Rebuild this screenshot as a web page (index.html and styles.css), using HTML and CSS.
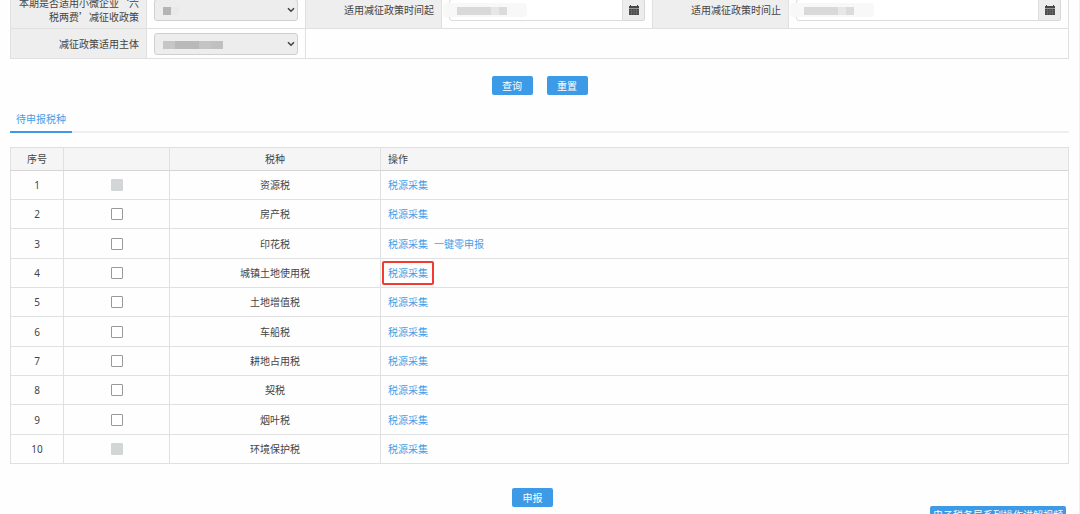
FILE: index.html
```html
<!DOCTYPE html>
<html lang="zh-CN">
<head>
    <meta charset="utf-8">
    <title>待申报税种</title>
    <meta name="viewport" content="width=device-width, initial-scale=1">
    <link rel="stylesheet" href="styles.css">
</head>
<body>
    <main class="page">
        <form id="query">
            <table class="form-table">
                <colgroup>
                    <col class="c-label"><col class="c-select">
                    <col class="c-label"><col class="c-date">
                    <col class="c-label"><col>
                </colgroup>
                <tr class="tall">
                    <th><label for="sfsy">本期是否适用小微企业‘六<br>税两费’减征收政策</label></th>
                    <td>
                        <div class="field">
                            <select id="sfsy"><option></option></select>
                            <svg class="chevron" viewBox="0 0 8 6"><path d="M1 1.2 4 4.2 7 1.2" /></svg>
                            <span class="mask short"><i></i><i></i></span>
                        </div>
                    </td>
                    <th><label for="sjq">适用减征政策时间起</label></th>
                    <td>
                        <div class="field">
                            <input id="sjq" type="text">
                            <button type="button" class="cal" aria-label="选择日期">
                                <svg viewBox="0 0 10 10"><path d="M1 0h1v1h6V0h1v1h1v2H0V1h1zM0 3.6h10V10H0z" /><path class="grid" d="M0 5.8h10M0 8h10M2.5 3.6V10M5 3.6V10M7.5 3.6V10" /></svg>
                            </button>
                            <span class="mask date"><i></i><i></i><i></i></span>
                        </div>
                    </td>
                    <th><label for="sjz">适用减征政策时间止</label></th>
                    <td>
                        <div class="field">
                            <input id="sjz" type="text">
                            <button type="button" class="cal" aria-label="选择日期">
                                <svg viewBox="0 0 10 10"><path d="M1 0h1v1h6V0h1v1h1v2H0V1h1zM0 3.6h10V10H0z" /><path class="grid" d="M0 5.8h10M0 8h10M2.5 3.6V10M5 3.6V10M7.5 3.6V10" /></svg>
                            </button>
                            <span class="mask date"><i></i><i></i><i></i></span>
                        </div>
                    </td>
                </tr>
                <tr>
                    <th><label for="syzt">减征政策适用主体</label></th>
                    <td>
                        <div class="field">
                            <select id="syzt"><option></option></select>
                            <svg class="chevron" viewBox="0 0 8 6"><path d="M1 1.2 4 4.2 7 1.2" /></svg>
                            <span class="mask long"><i></i><i></i><i></i><i></i><i></i></span>
                        </div>
                    </td>
                    <td colspan="4"></td>
                </tr>
            </table>
            <div class="buttons">
                <button type="button" class="btn">查询</button>
                <button type="reset" class="btn">重置</button>
            </div>
        </form>

        <nav class="tabs">
            <a href="#list" class="tab active">待申报税种</a>
        </nav>

        <table class="list" id="list">
            <colgroup>
                <col class="c-no"><col class="c-check"><col class="c-name"><col>
            </colgroup>
            <thead>
                <tr><th>序号</th><th></th><th>税种</th><th class="ops">操作</th></tr>
            </thead>
            <tbody>
                <tr>
                    <td class="num">1</td>
                    <td><input type="checkbox" aria-label="资源税" disabled></td>
                    <td>资源税</td>
                    <td class="ops"><a href="#">税源采集</a></td>
                </tr>
                <tr>
                    <td class="num">2</td>
                    <td><input type="checkbox" aria-label="房产税"></td>
                    <td>房产税</td>
                    <td class="ops"><a href="#">税源采集</a></td>
                </tr>
                <tr>
                    <td class="num">3</td>
                    <td><input type="checkbox" aria-label="印花税"></td>
                    <td>印花税</td>
                    <td class="ops"><a href="#">税源采集</a><a href="#">一键零申报</a></td>
                </tr>
                <tr>
                    <td class="num">4</td>
                    <td><input type="checkbox" aria-label="城镇土地使用税"></td>
                    <td>城镇土地使用税</td>
                    <td class="ops"><a href="#" class="marked">税源采集</a></td>
                </tr>
                <tr>
                    <td class="num">5</td>
                    <td><input type="checkbox" aria-label="土地增值税"></td>
                    <td>土地增值税</td>
                    <td class="ops"><a href="#">税源采集</a></td>
                </tr>
                <tr>
                    <td class="num">6</td>
                    <td><input type="checkbox" aria-label="车船税"></td>
                    <td>车船税</td>
                    <td class="ops"><a href="#">税源采集</a></td>
                </tr>
                <tr>
                    <td class="num">7</td>
                    <td><input type="checkbox" aria-label="耕地占用税"></td>
                    <td>耕地占用税</td>
                    <td class="ops"><a href="#">税源采集</a></td>
                </tr>
                <tr>
                    <td class="num">8</td>
                    <td><input type="checkbox" aria-label="契税"></td>
                    <td>契税</td>
                    <td class="ops"><a href="#">税源采集</a></td>
                </tr>
                <tr>
                    <td class="num">9</td>
                    <td><input type="checkbox" aria-label="烟叶税"></td>
                    <td>烟叶税</td>
                    <td class="ops"><a href="#">税源采集</a></td>
                </tr>
                <tr>
                    <td class="num">10</td>
                    <td><input type="checkbox" aria-label="环境保护税" disabled></td>
                    <td>环境保护税</td>
                    <td class="ops"><a href="#">税源采集</a></td>
                </tr>
            </tbody>
        </table>

        <div class="buttons submit">
            <button type="button" class="btn">申报</button>
        </div>
    </main>
    <a href="#" class="video-link">电子税务局系列操作讲解视频</a>
</body>
</html>
```
FILE: styles.css
```css
* {
    box-sizing: border-box;
}

html {
    overflow: hidden;
}

body {
    display: flow-root;
    min-height: 100vh;
    margin: 0;
    border-right: 1px solid #efefef;
    background: #fefefe;
    color: #444;
    font: 10px/14px "Noto Sans CJK SC", sans-serif;
}

.page {
    margin-top: -9px;
    padding: 0 10px;
}

table {
    width: 100%;
    border-collapse: collapse;
    table-layout: fixed;
}

th {
    font-weight: normal;
}

th, td {
    border: 1px solid #e0e0e0;
}

a {
    color: #469fe6;
    text-decoration: none;
}

/* query form */
.c-label { width: 136px; }
.c-select { width: 159px; }
.c-date { width: 211px; }

.form-table tr {
    height: 30px;
}

.form-table tr.tall {
    height: 37px;
}

.form-table th {
    padding: 0 7px 0 0;
    background: #eee;
    text-align: right;
}

.form-table td {
    padding: 0 7px;
}

.field {
    position: relative;
    display: flex;
    height: 22px;
}

.field select, .field input {
    flex: 1;
    min-width: 0;
    margin: 0;
    border: 1px solid #ddd;
    background: #fff;
    font: inherit;
}

.field select {
    appearance: none;
    border-color: #d0d0d0;
    border-radius: 3px;
    background: #ededed;
}

.field input {
    border-radius: 3px 0 0 3px;
}

.chevron {
    position: absolute;
    right: 3px;
    top: 8px;
    width: 8px;
    height: 6px;
    fill: none;
    stroke: #444;
    stroke-width: 1.6;
    pointer-events: none;
}

.cal {
    display: flex;
    align-items: center;
    justify-content: center;
    width: 22px;
    padding: 0;
    border: 1px solid #d8d8d8;
    border-left: 0;
    border-radius: 0 3px 3px 0;
    background: #ededed;
}

.cal svg {
    width: 10px;
    height: 10px;
    fill: #484848;
}

.cal .grid {
    fill: none;
    stroke: #888;
    stroke-width: 0.4;
}

/* hidden values */
.mask {
    position: absolute;
    left: 0;
    top: 8px;
    display: flex;
    height: 8px;
    pointer-events: none;
}

.mask i {
    width: 8px;
    background: #c4c4c4;
}

.short, .long {
    left: 9px;
}

.short i:nth-child(1) { background: #b4b4b4; }
.short i:nth-child(2) { background: #e8e9ea; }

.long i { width: 12px; }
.long i:nth-child(1) { background: #c6c6c6; }
.long i:nth-child(2), .long i:nth-child(3) { background: #b9b9b9; }
.long i:nth-child(5) { background: #c0c0c0; }

.date {
    left: -6px;
    top: 4px;
    height: 14px;
    padding: 4px 20px 2px 14px;
    border-radius: 4px;
    background: #f8f8f8;
}

.date i:nth-child(1) { width: 34px; background: #d9d9d9; }
.date i:nth-child(2) { background: #e6e7e7; }
.date i:nth-child(3) { background: #dbdbdb; }

/* buttons */
.buttons {
    display: flex;
    justify-content: center;
    gap: 14px;
    margin-top: 17px;
}

.btn {
    width: 41px;
    height: 19px;
    padding: 0;
    border: 0;
    border-radius: 2px;
    background: #3d9ae6;
    color: #fff;
    font: inherit;
}

.submit {
    margin-top: 24px;
    padding-right: 14px;
}

/* tabs */
.tabs {
    display: flex;
    margin: 12px 0 14px;
    border-bottom: 2px solid #eee;
}

.tab {
    margin-bottom: -2px;
    padding: 5px 6px;
    border-bottom: 2px solid transparent;
}

.tab.active {
    border-color: #3d9ae6;
}

/* tax list */
.c-no { width: 53px; }
.c-check { width: 106px; }
.c-name { width: 211px; }

.list th, .list td {
    padding: 0;
    text-align: center;
}

.list thead tr {
    height: 23px;
    background: #f5f5f5;
}

.list thead th {
    border-bottom-color: #d6d6d6;
}

.list tbody tr {
    height: 29px;
}

.list tbody tr:nth-child(3n) {
    height: 30px;
}

.list .num {
    font-family: "Noto Sans", sans-serif;
}

.list th.ops, .list td.ops {
    padding: 0 7px;
    text-align: left;
}

.ops a + a {
    margin-left: 6px;
}

.list input {
    appearance: none;
    display: block;
    width: 12px;
    height: 12px;
    margin: 0 auto;
    border: 1px solid #999;
    border-radius: 1px;
    background: #fff;
}

.list input:disabled {
    border-color: #d3d6d6;
    background: #d3d6d6;
}

.marked {
    display: inline-block;
    margin: -5px -6px;
    padding: 3px 4px;
    border: 2px solid #f23a30;
    border-radius: 2px;
}

.video-link {
    position: fixed;
    right: 14px;
    bottom: -11px;
    padding: 2px 3px 3px;
    border-radius: 2px;
    background: #3d9ae6;
    color: #fff;
}
```
